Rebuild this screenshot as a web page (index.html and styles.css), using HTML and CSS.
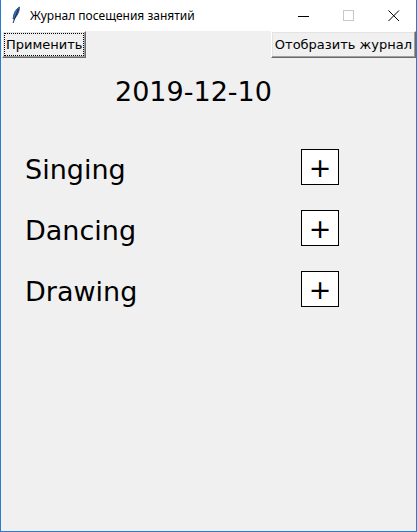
FILE: index.html
```html
<!DOCTYPE html>
<html>
<head>
<meta charset="utf-8">
<link rel="stylesheet" href="styles.css">
</head>
<body>
<div class="window">
  <div class="titlebar">
    <svg class="app-icon" width="10" height="18" viewBox="0 0 10 18">
      <path d="M8.5 1 C5 3 2.5 7 2.2 12 L2 13 L3 13 C6 10 8.5 6 8.5 1 Z" fill="#3b6fb6" stroke="#1d3f75" stroke-width="0.8"/>
      <path d="M7.5 3 L2 17" stroke="#1a2a40" stroke-width="1"/>
    </svg>
    <span class="title">Журнал посещения занятий</span>
    <div class="controls">
      <span class="ctl"><svg width="12" height="12" viewBox="0 0 12 12"><path d="M0 6.5 H11" stroke="#000" stroke-width="1"/></svg></span>
      <span class="ctl"><svg width="12" height="12" viewBox="0 0 12 12"><rect x="0.5" y="0.5" width="10" height="10" fill="none" stroke="#c8c8c8" stroke-width="1"/></svg></span>
      <span class="ctl"><svg width="12" height="12" viewBox="0 0 12 12"><path d="M0.5 0.5 L11 11 M11 0.5 L0.5 11" stroke="#000" stroke-width="1"/></svg></span>
    </div>
  </div>
  <div class="content">
    <div class="toolbar">
      <button class="btn focused"><span class="focus">Применить</span></button>
      <button class="btn">Отобразить журнал</button>
    </div>
    <div class="date">2019-12-10</div>
    <div class="rows">
      <div class="row"><span class="label">Singing</span><span class="plus">+</span></div>
      <div class="row"><span class="label">Dancing</span><span class="plus">+</span></div>
      <div class="row"><span class="label">Drawing</span><span class="plus">+</span></div>
    </div>
  </div>
</div>
</body>
</html>
```
FILE: styles.css
```css
html, body {
  margin: 0;
  padding: 0;
}
body {
  width: 417px;
  height: 532px;
  overflow: hidden;
  font-family: "DejaVu Sans", Verdana, sans-serif;
}
.window {
  box-sizing: border-box;
  width: 417px;
  height: 532px;
  border: 1px solid #2b7bd0;
  border-top: none;
  display: flex;
  flex-direction: column;
  background: #f0f0f0;
}
.titlebar {
  height: 31px;
  background: #fff;
  display: flex;
  align-items: center;
  flex: none;
}
.app-icon {
  margin-left: 10px;
  margin-top: -2px;
}
.title {
  margin-left: 9px;
  font-family: "Noto Sans", "Liberation Sans", sans-serif;
  font-size: 12px;
  color: #000;
}
.controls {
  margin-left: auto;
  display: flex;
  height: 100%;
}
.ctl {
  width: 45px;
  display: flex;
  align-items: center;
  justify-content: center;
}
.content {
  flex: 1;
  display: flex;
  flex-direction: column;
}
.toolbar {
  display: flex;
  justify-content: space-between;
  padding-left: 1px;
}
.btn {
  font-family: "DejaVu Sans", Verdana, sans-serif;
  font-size: 13px;
  color: #000;
  background: #f0f0f0;
  border: 1px solid;
  border-color: #fff #696969 #696969 #fff;
  box-shadow: inset -1px -1px 0 #a0a0a0, inset 1px 1px 0 #e3e3e3;
  padding: 0 3px;
  height: 27px;
  margin: 0;
}
.btn.focused {
  padding: 0 2px;
}
.focus {
  display: inline-block;
  outline: 1px dotted #000;
  padding: 3px 1px;
  line-height: 15px;
}
.date {
  font-size: 27px;
  padding-left: 114px;
  margin-top: 18px;
  line-height: 32px;
}
.rows {
  display: flex;
  flex-direction: column;
  gap: 24px;
  margin-top: 41px;
  padding-left: 24px;
  padding-right: 77px;
}
.row {
  display: flex;
  justify-content: space-between;
  align-items: flex-start;
}
.label {
  font-size: 27px;
  line-height: 32px;
  margin-top: 5px;
}
.plus {
  box-sizing: border-box;
  width: 38px;
  height: 36px;
  border: 1px solid #000;
  background: #fff;
  display: flex;
  align-items: center;
  justify-content: center;
  font-size: 27px;
  line-height: 1;
}
```
